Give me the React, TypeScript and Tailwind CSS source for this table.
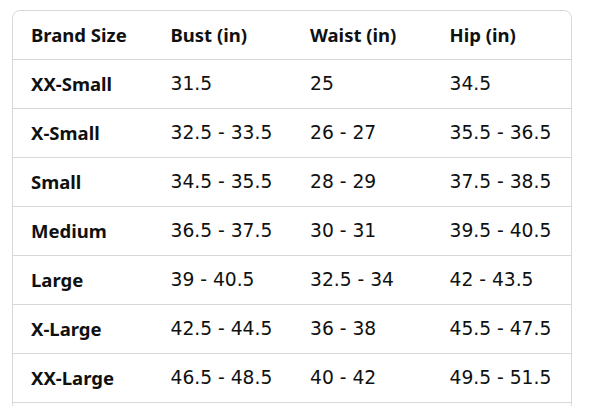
import React from "react";

const rows = [
  ["XX-Small", "31.5", "25", "34.5"],
  ["X-Small", "32.5 - 33.5", "26 - 27", "35.5 - 36.5"],
  ["Small", "34.5 - 35.5", "28 - 29", "37.5 - 38.5"],
  ["Medium", "36.5 - 37.5", "30 - 31", "39.5 - 40.5"],
  ["Large", "39 - 40.5", "32.5 - 34", "42 - 43.5"],
  ["X-Large", "42.5 - 44.5", "36 - 38", "45.5 - 47.5"],
  ["XX-Large", "46.5 - 48.5", "40 - 42", "49.5 - 51.5"],
  ["", "", "", ""],
];

const bold = "pl-[18px] font-bold text-[18.5px] [font-family:'Noto_Sans',sans-serif]";
const reg = "pl-[18px] text-[18.7px] [font-family:'DejaVu_Sans',sans-serif]";

export default function App() {
  return (
    <div className="bg-white w-[589px] h-[406px] overflow-hidden pt-[10px] pl-[12px]">
      <div className="w-[560px] border border-[#d5d9d9] rounded-[8px] text-[#0f1111]">
        <div className="grid grid-cols-4 h-[48px] items-center">
          <div className={bold}>Brand Size</div>
          <div className={bold}>Bust (in)</div>
          <div className={bold}>Waist (in)</div>
          <div className={bold}>Hip (in)</div>
        </div>
        {rows.map((r, i) => (
          <div key={i} className="grid grid-cols-4 h-[49px] items-center border-t border-[#d5d9d9]">
            <div className={bold}>{r[0]}</div>
            <div className={reg}>{r[1]}</div>
            <div className={reg}>{r[2]}</div>
            <div className={reg}>{r[3]}</div>
          </div>
        ))}
      </div>
    </div>
  );
}
